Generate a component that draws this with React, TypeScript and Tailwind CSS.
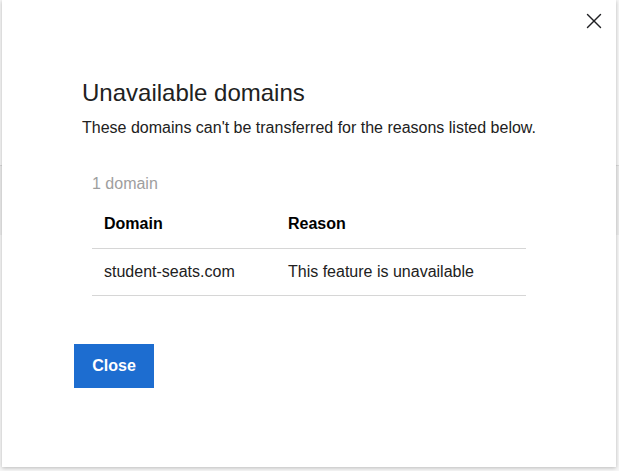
import { X } from 'lucide-react';

type Row = {
  domain: string;
  reason: string;
};

const rows: Row[] = [
  { domain: 'student-seats.com', reason: 'This feature is unavailable' },
];

export default function App() {
  return (
    <div className="relative h-[471px] w-[619px] overflow-hidden bg-[#f7f7f7] font-['Liberation_Sans',Arial,sans-serif]">
      {/* page behind the dialog */}
      <div className="h-[165px]" />
      <div className="h-[70px] border-t border-[#d9d9d9] bg-[#ececec]" />

      <div className="absolute left-[2px] top-0 flex h-[467px] w-[614px] flex-col bg-white shadow-[0_1px_4px_rgba(0,0,0,0.25)]">
        <div className="flex justify-end pr-[9px] pt-[8px]">
          <button className="flex h-[26px] w-[26px] items-center justify-center text-[#202124]">
            <X size={26} strokeWidth={1.3} />
          </button>
        </div>

        <div className="pl-[80px] pt-[43px]">
          <h1 className="text-[24px] leading-[32px] text-[#212121]">
            Unavailable domains
          </h1>
          <p className="mt-[9px] text-[16px] leading-[20px] text-[#212121]">
            These domains can't be transferred for the reasons listed below.
          </p>
        </div>

        <div className="ml-[90px] mt-[36px] w-[434px]">
          <div className="text-[16px] leading-[20px] text-[#9e9e9e]">
            1 domain
          </div>
          <table className="mt-[6px] w-full text-left text-[16px] text-[#212121]">
            <thead>
              <tr className="border-b border-[#d6d6d6]">
                <th className="h-[48px] w-[184px] px-[12px] font-bold text-black">
                  Domain
                </th>
                <th className="h-[48px] px-[12px] font-bold text-black">
                  Reason
                </th>
              </tr>
            </thead>
            <tbody>
              {rows.map(row => (
                <tr key={row.domain} className="border-b border-[#d6d6d6]">
                  <td className="h-[47px] px-[12px]">{row.domain}</td>
                  <td className="h-[47px] px-[12px]">{row.reason}</td>
                </tr>
              ))}
            </tbody>
          </table>
        </div>

        <div className="pl-[72px] pt-[48px]">
          <button className="h-[44px] w-[80px] bg-[#1d6dd0] text-[16px] font-bold text-white">
            Close
          </button>
        </div>
      </div>
    </div>
  );
}
